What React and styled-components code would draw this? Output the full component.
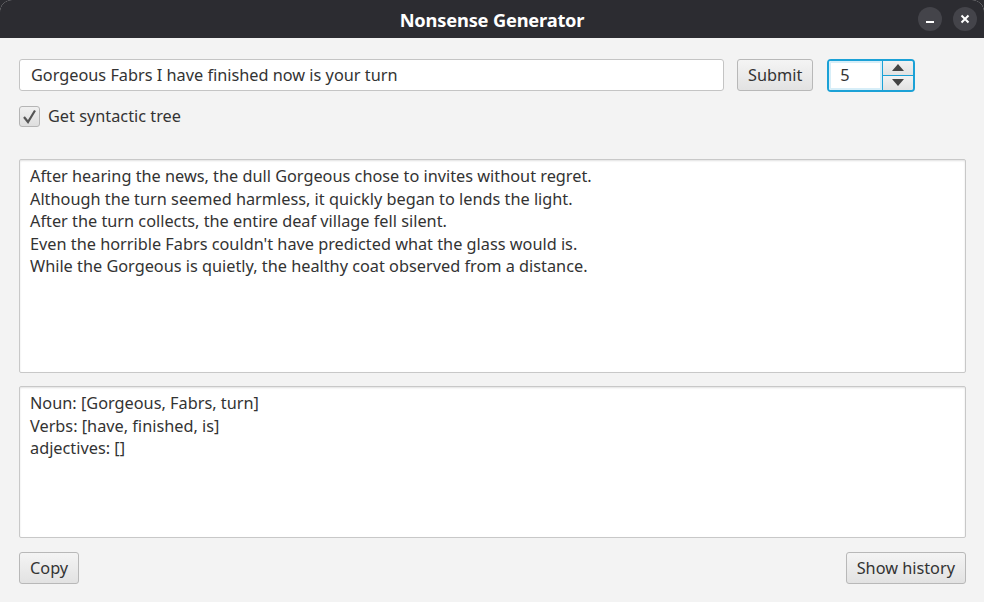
import styled, { createGlobalStyle } from "styled-components"

const GlobalStyle = createGlobalStyle`
html, body {
  margin: 0;
  padding: 0;
  background: #2c2c31;
}
* { box-sizing: border-box; }
`

const Window = styled.div`
width: 984px;
height: 602px;
display: flex;
flex-direction: column;
background: #f3f3f3;
border-radius: 12px 12px 0 0;
overflow: hidden;
font-family: "Noto Sans", "Open Sans", sans-serif;
color: #333333;
`

const TitleBar = styled.div`
height: 38px;
flex-shrink: 0;
background: #2c2c31;
display: flex;
align-items: center;
justify-content: center;
position: relative;
`

const Title = styled.span`
color: #ffffff;
font-family: "Noto Sans", sans-serif;
font-weight: 700;
font-size: 18.3px;
letter-spacing: -0.2px;
`

const WindowControls = styled.div`
position: absolute;
right: 7px;
top: 7px;
display: flex;
gap: 11px;
`

const CircleButton = styled.div`
width: 24px;
height: 24px;
border-radius: 50%;
background: #44444a;
display: flex;
align-items: center;
justify-content: center;
`

const Content = styled.div`
flex: 1;
display: flex;
flex-direction: column;
padding: 21px 18px 18px 19px;
`

const TopRow = styled.div`
display: flex;
align-items: center;
height: 32px;
`

const TextField = styled.div`
width: 705px;
height: 32px;
background: #ffffff;
border: 1px solid #c4c4c4;
border-radius: 3px;
display: flex;
align-items: center;
padding: 0 11px;
font-size: 16.3px;
`

const Button = styled.div`
height: 32px;
padding: 0 10px;
display: inline-flex;
align-items: center;
justify-content: center;
border: 1px solid #b8b8b8;
border-radius: 3px;
background: linear-gradient(#f4f4f4, #e2e2e2);
font-size: 16.3px;
color: #333;
margin-left: ${props => props.$ml || "0"};
`

const Spinner = styled.div`
margin-left: 14px;
width: 88px;
height: 33px;
border: 2px solid #1ba1d6;
border-radius: 4px;
display: flex;
overflow: hidden;
`

const SpinnerValue = styled.div`
flex: 1;
background: #ffffff;
border: 2px solid #d7eef8;
display: flex;
align-items: center;
padding-left: 9px;
font-size: 16.3px;
`

const SpinnerArrows = styled.div`
width: 31px;
display: flex;
flex-direction: column;
border-left: 1.5px solid #1ba1d6;
`

const ArrowCell = styled.div`
flex: 1;
display: flex;
align-items: center;
justify-content: center;
background: linear-gradient(#f2f2f2, #e2e2e2);
border-top: ${props => props.$bottom ? "1.5px solid #1ba1d6" : "none"};
`

const CheckRow = styled.div`
display: flex;
align-items: center;
margin-top: 14px;
gap: 8px;
font-size: 16.3px;
`

const CheckBox = styled.div`
width: 21px;
height: 21px;
border: 1px solid #b5b5b5;
border-radius: 3px;
background: linear-gradient(#f0f0f0, #dedede);
display: flex;
align-items: center;
justify-content: center;
`

const TextArea = styled.div`
height: ${props => props.$h};
margin-top: ${props => props.$mt};
background: #ffffff;
border: 1px solid #c8c8c8;
border-radius: 2px;
box-shadow: inset 0 1px 2px rgba(0,0,0,0.12);
padding: 5px 10px;
font-size: 16.3px;
line-height: 22.6px;
white-space: pre;
`

const BottomRow = styled.div`
display: flex;
justify-content: space-between;
margin-top: 14px;
`

export default function App() {
    return (
        <>
            <GlobalStyle />
            <Window>
                <TitleBar>
                    <Title>Nonsense Generator</Title>
                    <WindowControls>
                        <CircleButton>
                            <svg width="10" height="10" viewBox="0 0 10 10">
                                <rect x="1" y="7" width="8" height="2" fill="#fff" />
                            </svg>
                        </CircleButton>
                        <CircleButton>
                            <svg width="10" height="10" viewBox="0 0 10 10">
                                <path d="M1.5 1.5 L8.5 8.5 M8.5 1.5 L1.5 8.5" stroke="#fff" strokeWidth="2" />
                            </svg>
                        </CircleButton>
                    </WindowControls>
                </TitleBar>
                <Content>
                    <TopRow>
                        <TextField>Gorgeous Fabrs I have finished now is your turn</TextField>
                        <Button $ml="13px">Submit</Button>
                        <Spinner>
                            <SpinnerValue>5</SpinnerValue>
                            <SpinnerArrows>
                                <ArrowCell>
                                    <svg width="12" height="7" viewBox="0 0 12 7">
                                        <path d="M6 0 L12 7 L0 7 Z" fill="#444" />
                                    </svg>
                                </ArrowCell>
                                <ArrowCell $bottom>
                                    <svg width="12" height="7" viewBox="0 0 12 7">
                                        <path d="M0 0 L12 0 L6 7 Z" fill="#444" />
                                    </svg>
                                </ArrowCell>
                            </SpinnerArrows>
                        </Spinner>
                    </TopRow>
                    <CheckRow>
                        <CheckBox>
                            <svg width="15" height="15" viewBox="0 0 15 15">
                                <path d="M2 8 L6 13 L13 1.5" stroke="#555" strokeWidth="2.2" fill="none" />
                            </svg>
                        </CheckBox>
                        Get syntactic tree
                    </CheckRow>
                    <TextArea $h="214px" $mt="32px">
{`After hearing the news, the dull Gorgeous chose to invites without regret.
Although the turn seemed harmless, it quickly began to lends the light.
After the turn collects, the entire deaf village fell silent.
Even the horrible Fabrs couldn't have predicted what the glass would is.
While the Gorgeous is quietly, the healthy coat observed from a distance.`}
                    </TextArea>
                    <TextArea $h="152px" $mt="13px">
{`Noun: [Gorgeous, Fabrs, turn]
Verbs: [have, finished, is]
adjectives: []`}
                    </TextArea>
                    <BottomRow>
                        <Button>Copy</Button>
                        <Button>Show history</Button>
                    </BottomRow>
                </Content>
            </Window>
        </>
    )
}
